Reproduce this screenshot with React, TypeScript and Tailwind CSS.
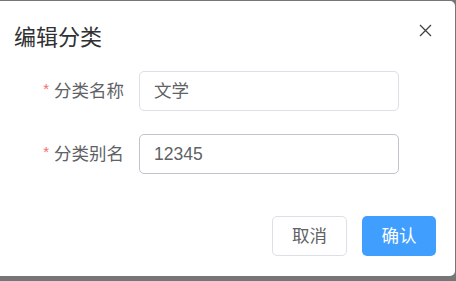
const FONT = '"Liberation Sans", "Noto Sans CJK SC", sans-serif';

function Row({ label, value, hover }: { label: string; value: string; hover?: boolean }) {
  return (
    <div className="flex items-center">
      <label className="w-[125px] pr-[15px] flex justify-end items-center text-[17.5px] text-[#606266]">
        <span className="text-[#f56c6c] text-[15px] mr-[5px] -mt-[4px]">*</span>
        {label}
      </label>
      <div
        className={
          'w-[260px] h-[40px] rounded-[5px] border flex items-center px-[14px] text-[17.5px] text-[#606266] ' +
          (hover ? 'border-[#c0c4cc]' : 'border-[#dcdfe6]')
        }
      >
        {value}
      </div>
    </div>
  );
}

export default function App() {
  return (
    <div className="w-[456px] h-[281px] bg-[#767676] pt-[1px]" style={{ fontFamily: FONT }}>
      <div className="relative w-[455px] h-[275px] bg-white rounded-r-[5px] flex flex-col">
        <div className="pl-[14px] pt-[22px] h-[53px]">
          <span className="text-[22px] leading-[30px] text-[#303133]">编辑分类</span>
        </div>
        <button className="absolute right-[23px] top-[22px] w-[14px] h-[14px] flex items-center justify-center">
          <svg width="13" height="13" viewBox="0 0 13 13">
            <path d="M1 1L12 12M12 1L1 12" stroke="#404247" strokeWidth="1.3" fill="none" />
          </svg>
        </button>
        <div className="pl-[14px] pt-[17px] flex flex-col gap-[23px]">
          <Row label="分类名称" value="文学" />
          <Row label="分类别名" value="12345" hover />
        </div>
        <div className="flex justify-end gap-[15px] pr-[19px] pt-[42px]">
          <button className="w-[75px] h-[40px] rounded-[5px] border border-[#dcdfe6] bg-white text-[17.5px] text-[#606266]">
            取消
          </button>
          <button className="w-[74px] h-[40px] rounded-[5px] bg-[#409eff] text-[17.5px] text-white">
            确认
          </button>
        </div>
      </div>
    </div>
  );
}
